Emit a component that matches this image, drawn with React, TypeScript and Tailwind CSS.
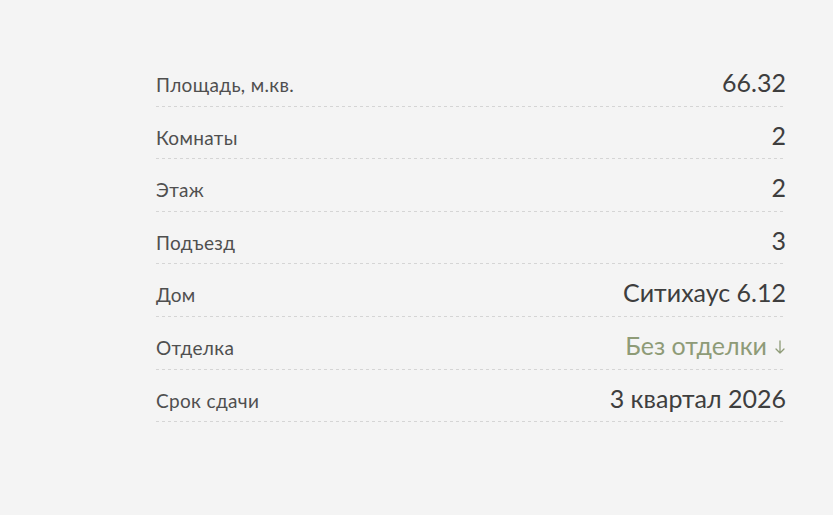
import React from "react";

const rows: { label: string; value: string; accent?: boolean }[] = [
  { label: "Площадь, м.кв.", value: "66.32" },
  { label: "Комнаты", value: "2" },
  { label: "Этаж", value: "2" },
  { label: "Подъезд", value: "3" },
  { label: "Дом", value: "Ситихаус 6.12" },
  { label: "Отделка", value: "Без отделки", accent: true },
  { label: "Срок сдачи", value: "3 квартал 2026" },
];

export default function App() {
  return (
    <div
      className="w-[833px] h-[515px] bg-[#f4f4f4] pt-[54px] pl-[156px]"
      style={{ fontFamily: "Lato, 'Noto Sans', sans-serif" }}
    >
      <div className="w-[627px] flex flex-col">
        {rows.map((r) => (
          <div key={r.label} className="h-[52.6px] flex flex-col">
            <div className="flex items-baseline justify-between pt-[16px]">
              <span className="text-[19px] leading-none tracking-[0.35px] text-[#4f4f4f]">{r.label}</span>
              {r.accent ? (
                <span className="text-[25px] leading-none text-[#8e9b77] flex items-baseline gap-[8px] mr-[-2px]">
                  {r.value}
                  <svg width="10" height="14" viewBox="0 0 10 14" className="relative top-[-1px]" fill="none" stroke="#8e9b77" strokeWidth="1.3" strokeLinecap="round" strokeLinejoin="round">
                    <path d="M5 1v12M1 9l4 4 4-4" />
                  </svg>
                </span>
              ) : (
                <span className="text-[25px] leading-none text-[#3e3e3e] mr-[-3px]">{r.value}</span>
              )}
            </div>
            <div className="mt-auto h-px bg-[repeating-linear-gradient(to_right,#d5d5d5_0_3px,transparent_3px_6px)]" />
          </div>
        ))}
      </div>
    </div>
  );
}
